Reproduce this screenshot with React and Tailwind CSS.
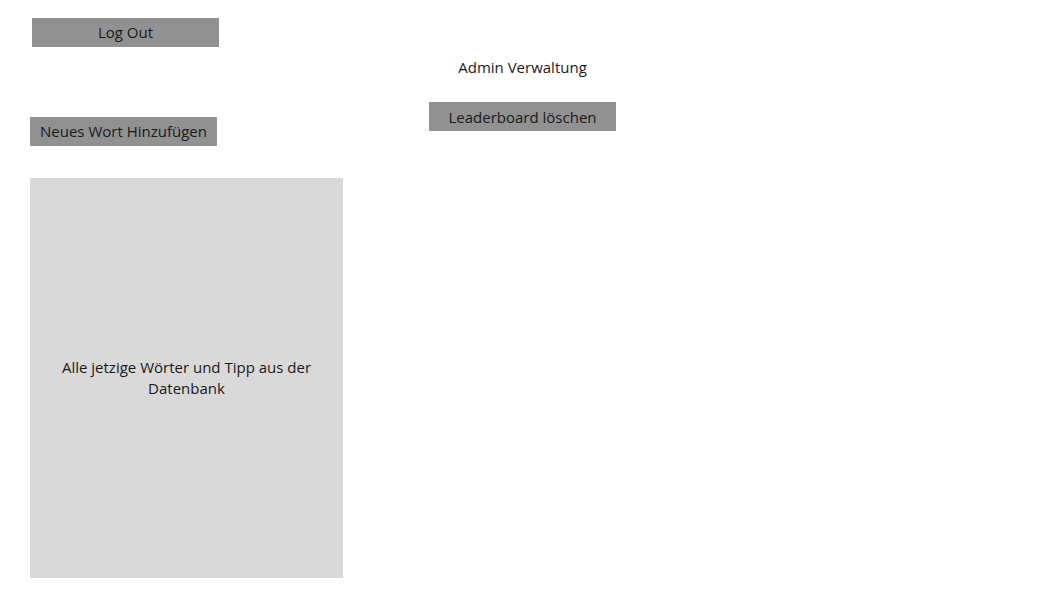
import React from "react";

const Btn = ({ children, extra = "" }) => (
  <div
    className={`w-[187px] h-[29px] bg-[#919191] flex items-center justify-center text-[15px] text-[#1a1a1a] ${extra}`}
  >
    {children}
  </div>
);

const App = () => {
  return (
    <div
      className="w-[1051px] h-[601px] bg-white text-[#1a1a1a]"
      style={{ fontFamily: "'Open Sans', 'Noto Sans', sans-serif" }}
    >
      <div className="pt-[18px] pl-[32px]">
        <Btn>Log Out</Btn>
      </div>
      <div className="flex">
        <div className="ml-[30px] w-[313px] flex flex-col">
          <div className="mt-[70px]">
            <Btn>Neues Wort Hinzufügen</Btn>
          </div>
          <div className="mt-[32px] h-[400px] bg-[#d9d9d9] flex items-center justify-center px-[28px] text-center text-[15px] leading-[21px]">
            Alle jetzige Wörter und Tipp aus der Datenbank
          </div>
        </div>
        <div className="ml-[86px] w-[187px] flex flex-col items-center">
          <div className="mt-[10px] h-[20px] leading-[20px] text-[15px] text-center whitespace-nowrap">
            Admin Verwaltung
          </div>
          <div className="mt-[25px]">
            <Btn extra="pt-[1px]">Leaderboard löschen</Btn>
          </div>
        </div>
      </div>
    </div>
  );
};

export default App;
